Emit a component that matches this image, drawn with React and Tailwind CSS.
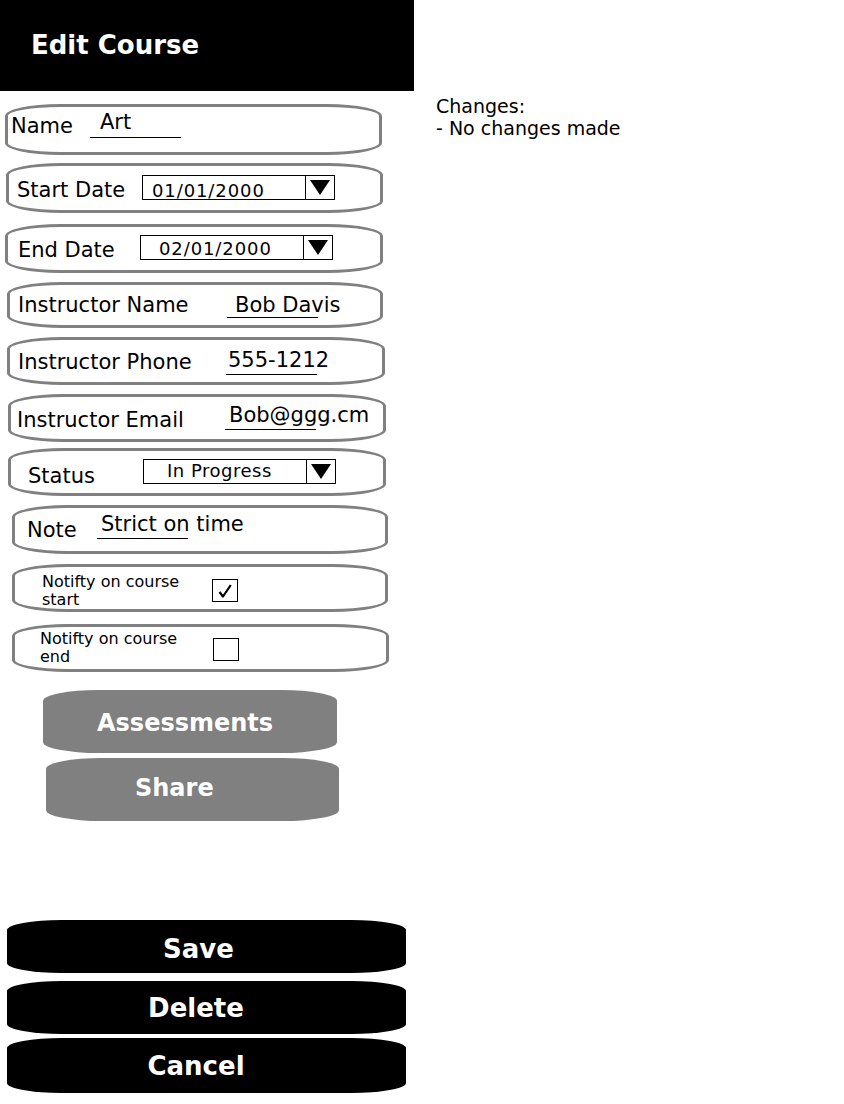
import clsx from 'clsx';

function Row({ className, children }) {
  return (
    <div
      className={clsx(
        'box-border flex items-start border-[3px] border-[#808080] rounded-[55px/12px]',
        className
      )}
    >
      {children}
    </div>
  );
}

function Label({ className, children }) {
  return <span className={clsx('shrink-0 text-[21px] leading-none', className)}>{children}</span>;
}

// underline is a fixed width, the text may run past it
function Underlined({ className, children }) {
  return (
    <div className={clsx('shrink-0 border-b border-black whitespace-nowrap text-[21px] leading-none', className)}>
      {children}
    </div>
  );
}

function Triangle() {
  return (
    <svg width="20" height="15" viewBox="0 0 20 15">
      <polygon points="0,0 20,0 10,15" fill="black" />
    </svg>
  );
}

function CheckMark() {
  return (
    <svg width="14" height="14" viewBox="0 0 14 14">
      <path d="M1.5 8 L5 12.5 L12.8 1" fill="none" stroke="black" strokeWidth="2.2" strokeLinejoin="round" />
    </svg>
  );
}

function Select({ className, textClass, value }) {
  return (
    <div className={clsx('box-border flex h-[25px] w-[193px] shrink-0 border border-black', className)}>
      <div className={clsx('flex-1 whitespace-nowrap leading-none', textClass)}>{value}</div>
      <div className="flex w-[29px] items-center justify-center border-l border-black">
        <Triangle />
      </div>
    </div>
  );
}

function Checkbox({ className, checked }) {
  return (
    <div
      className={clsx(
        'box-border flex h-[23px] w-[26px] shrink-0 items-center justify-center border-[1.5px] border-black',
        className
      )}
    >
      {checked && <CheckMark />}
    </div>
  );
}

export default function App() {
  return (
    <div className="flex min-h-[1104px] w-[844px] bg-white font-['DejaVu_Sans',Verdana,sans-serif] text-black">
      <div className="flex w-[414px] shrink-0 flex-col">
        <div className="flex h-[91px] items-center bg-black pl-[31px] text-[26px] font-bold text-white">
          Edit Course
        </div>

        <Row className="ml-[5px] mt-[13px] h-[51px] w-[377px]">
          <Label className="ml-[3px] mt-[9px] w-[79px]">Name</Label>
          <Underlined className="mt-[5px] w-[91px] pb-[4px] pl-[10px]">Art</Underlined>
        </Row>

        <Row className="ml-[6px] mt-[8px] h-[50px] w-[377px]">
          <Label className="ml-[8px] mt-[14px] w-[125px]">Start Date</Label>
          <Select
            className="mt-[9px]"
            textClass="pl-[9px] pt-[6px] text-[18px] tracking-[0.9px]"
            value="01/01/2000"
          />
        </Row>

        <Row className="ml-[5px] mt-[11px] h-[49px] w-[378px]">
          <Label className="ml-[10px] mt-[13px] w-[122px]">End Date</Label>
          <Select
            className="mt-[8px]"
            textClass="pl-[18px] pt-[4px] text-[18px] tracking-[0.9px]"
            value="02/01/2000"
          />
        </Row>

        <Row className="ml-[7px] mt-[9px] h-[46px] w-[376px]">
          <Label className="ml-[8px] mt-[10px] w-[209px]">Instructor Name</Label>
          <Underlined className="mt-[10px] w-[91px] pb-[1px] pl-[8px]">Bob Davis</Underlined>
        </Row>

        <Row className="ml-[7px] mt-[9px] h-[48px] w-[378px]">
          <Label className="ml-[8px] mt-[12px] w-[208px]">Instructor Phone</Label>
          <Underlined className="mt-[10px] w-[91px] pb-[3px] pl-[2px]">555-1212</Underlined>
        </Row>

        <Row className="ml-[8px] mt-[9px] h-[48px] w-[378px]">
          <Label className="ml-[6px] mt-[13px] w-[208px]">Instructor Email</Label>
          <Underlined className="mt-[8px] w-[91px] pb-[3px] pl-[4px]">Bob@ggg.cm</Underlined>
        </Row>

        <Row className="ml-[8px] mt-[6px] h-[48px] w-[378px]">
          <Label className="ml-[17px] mt-[15px] w-[115px]">Status</Label>
          <Select
            className="mt-[8px]"
            textClass="pl-[23px] pt-[2px] text-[18px] tracking-[0.5px]"
            value="In Progress"
          />
        </Row>

        <Row className="ml-[12px] mt-[9px] h-[49px] w-[376px]">
          <Label className="ml-[12px] mt-[12px] w-[70px]">Note</Label>
          <Underlined className="mt-[6px] w-[91px] pb-[3px] pl-[4px]">Strict on time</Underlined>
        </Row>

        <Row className="ml-[12px] mt-[10px] h-[48px] w-[376px]">
          <span className="ml-[27px] mt-[6px] w-[160px] shrink-0 text-[16px] leading-[18px]">
            Notifty on course start
          </span>
          <Checkbox className="ml-[10px] mt-[12px]" checked />
        </Row>

        <Row className="ml-[12px] mt-[12px] h-[48px] w-[377px]">
          <span className="ml-[25px] mt-[3px] w-[160px] shrink-0 text-[16px] leading-[18px]">
            Notifty on course end
          </span>
          <Checkbox className="ml-[13px] mt-[11px]" />
        </Row>

        <button className="ml-[43px] mt-[18px] flex h-[63px] w-[294px] items-center rounded-[56px/11px] bg-[#808080] pl-[54px] pt-[3px] text-[24px] font-bold leading-none text-white">
          Assessments
        </button>
        <button className="ml-[46px] mt-[5px] flex h-[63px] w-[293px] items-center rounded-[56px/11px] bg-[#808080] pb-[4px] pl-[89px] text-[24px] font-bold leading-none text-white">
          Share
        </button>

        <button className="ml-[7px] mt-[99px] flex h-[53px] w-[399px] items-center justify-center rounded-[55px/10px] bg-black pr-[16px] pt-[5px] text-[26px] font-bold leading-none text-white">
          Save
        </button>
        <button className="ml-[7px] mt-[8px] flex h-[53px] w-[399px] items-center justify-center rounded-[55px/10px] bg-black pr-[21px] text-[26px] font-bold leading-none text-white">
          Delete
        </button>
        <button className="ml-[7px] mt-[4px] flex h-[55px] w-[399px] items-center justify-center rounded-[55px/10px] bg-black pr-[21px] text-[26px] font-bold leading-none text-white">
          Cancel
        </button>
      </div>

      <div className="pl-[22px] pt-[95px] text-[19px] leading-[22px]">
        <div>Changes:</div>
        <div>- No changes made</div>
      </div>
    </div>
  );
}
